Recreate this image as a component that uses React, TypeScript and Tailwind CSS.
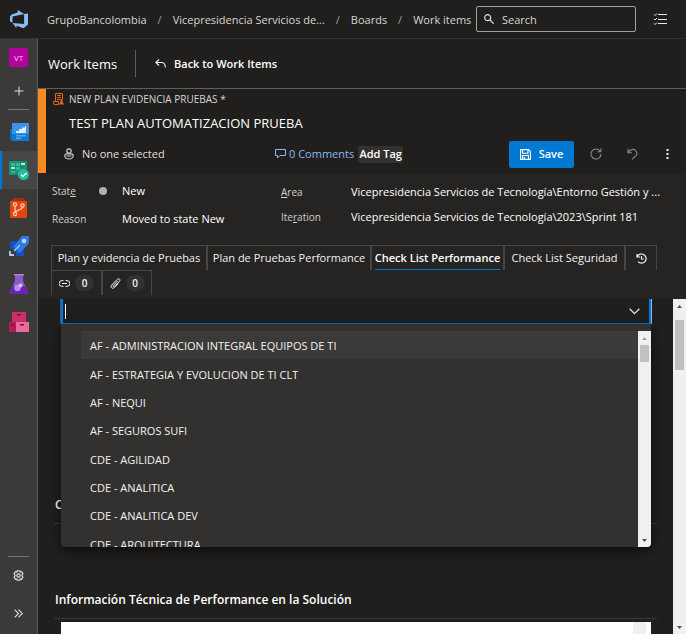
import type { ReactNode } from "react";

const BoardsIcon = () => (
  <svg width="20" height="20" viewBox="0 0 20 20" aria-hidden="true">
    <path d="M1 7h5v12H3a2 2 0 0 1-2-2z" fill="#1568b8" />
    <rect x="3" y="1" width="17" height="18" rx="1" fill="#3a95ea" />
    <path d="M3 12h17v6a1 1 0 0 1-1 1H4a1 1 0 0 1-1-1z" fill="#0f78d4" />
    <path d="M7 11V9h3V7h3V5.500h3V4h1v7z" fill="#d6ecff" />
    <path d="M7 13h10v1.500H7zM7 15.500h5V17H7z" fill="#5aa9f0" />
  </svg>
);

const WorkIcon = () => (
  <svg width="20" height="20" viewBox="0 0 20 20" aria-hidden="true">
    <rect x="0" y="1" width="18" height="14" rx="1" fill="#1b8f72" />
    <path d="M2 3h4v3H2zM7 3h4v3H7zM7 7h4v3H7zM2 11h4v2H2z" fill="#35b893" />
    <path d="M12 3h4v2h-4zM2 7h4v2H2z" fill="#a6f0d6" />
    <circle cx="14.500" cy="14.500" r="5.500" fill="#1fbf9c" />
    <path d="m12 14.500 2 2 3.500-3.500" fill="none" stroke="#fff" strokeWidth="1.400" />
  </svg>
);

const ReposIcon = () => (
  <svg width="20" height="20" viewBox="0 0 20 20" aria-hidden="true">
    <path d="M5 0h9l3 3H2z" fill="#a5300f" />
    <rect x="1" y="3" width="17" height="17" rx="1" fill="#e2450f" />
    <g fill="none" stroke="#ffc9b3" strokeWidth="1.300">
      <circle cx="6" cy="6.500" r="1.600" />
      <circle cx="13.500" cy="7.500" r="1.600" />
      <circle cx="6" cy="16" r="1.600" />
      <path d="M6 8v6.400M13.500 9.100c0 3.400-6.500 2.400-7.500 5.300" />
    </g>
  </svg>
);

const PipelinesIcon = () => (
  <svg width="20" height="20" viewBox="0 0 20 20" aria-hidden="true">
    <path d="M1 5h8l-6 8H1zM15 11v9H7v-4z" fill="#1450b8" />
    <path d="M13 0h7v7l-9 10-7-6z" fill="#2f78e8" />
    <path d="m4 10 7 7-2 1-6-6z" fill="#185bd0" />
    <circle cx="15" cy="5" r="2.300" fill="#b9d8ff" />
    <path d="m5 15 6-6" stroke="#a9ccff" strokeWidth="1.300" />
    <path d="M1 15v4h4" fill="none" stroke="#a9ccff" strokeWidth="1.800" />
  </svg>
);

const TestIcon = () => (
  <svg width="20" height="20" viewBox="0 0 20 20" aria-hidden="true">
    <path d="M6 0h8v7l5 11a1.400 1.400 0 0 1-1.300 2H2.300A1.400 1.400 0 0 1 1 18L6 7z" fill="#8c5bc9" />
    <path d="M4 12h12l3 6a1.400 1.400 0 0 1-1.300 2H2.300A1.400 1.400 0 0 1 1 18z" fill="#6a22b5" />
    <path d="M5 0h10v1.500H5z" fill="#a887d6" />
    <circle cx="8.500" cy="14" r="3.200" fill="#b98cf0" />
    <circle cx="11.500" cy="11.500" r="2" fill="#d9bfff" />
  </svg>
);

const ArtifactsIcon = () => (
  <svg width="20" height="20" viewBox="0 0 20 20" aria-hidden="true">
    <rect x="3" y="0" width="14" height="10" fill="#cc2f6c" />
    <rect x="0" y="10" width="7" height="10" fill="#b51a58" />
    <rect x="7" y="10" width="13" height="10" fill="#ea6a9c" />
    <path d="M8 2h4v1.500H8zM11 12h4v1.500h-4zM2 12h3v1.500H2z" fill="#7d1240" />
  </svg>
);

const NAV = [
  { label: "Overview", icon: <BoardsIcon />, active: false },
  { label: "Boards", icon: <WorkIcon />, active: true },
  { label: "Repos", icon: <ReposIcon />, active: false },
  { label: "Pipelines", icon: <PipelinesIcon />, active: false },
  { label: "Test Plans", icon: <TestIcon />, active: false },
  { label: "Artifacts", icon: <ArtifactsIcon />, active: false },
];

const OPTIONS = [
  "AF - ADMINISTRACION INTEGRAL EQUIPOS DE TI",
  "AF - ESTRATEGIA Y EVOLUCION DE TI CLT",
  "AF - NEQUI",
  "AF - SEGUROS SUFI",
  "CDE - AGILIDAD",
  "CDE - ANALITICA",
  "CDE - ANALITICA DEV",
  "CDE - ARQUITECTURA",
];

function TopBar() {
  return (
    <header className="flex h-[39px] shrink-0 items-center border-b border-[#323130] pl-[9px] text-[#d6d5d4]">
      <a href="#home" aria-label="Azure DevOps" className="mr-[18px]">
        <svg width="20" height="20" viewBox="0 0 20 20" aria-hidden="true">
          <path
            d="M19 4.500v11l-4.500 3.700-7-2.500v2.500l-4-5.200 11.600.9V5zM15.200 5.100 8.700 1v2.600L2.700 5.400 1 7.600v5l2.500 1.100V7.500z"
            fill="#86bdf8"
          />
        </svg>
      </a>
      <nav aria-label="Breadcrumb" className="flex items-center pt-[2px] whitespace-nowrap">
        <a href="#org">GrupoBancolombia</a>
        <span className="w-[26px] text-center text-[#a19f9d]">/</span>
        <a href="#project">Vicepresidencia Servicios de...</a>
        <span className="w-[26px] text-center text-[#a19f9d]">/</span>
        <a href="#boards">Boards</a>
        <span className="w-[26px] text-center text-[#a19f9d]">/</span>
        <a href="#items">Work items</a>
      </nav>
      <div className="ml-auto flex h-[26px] w-[160px] shrink-0 items-center rounded-xs border border-[#a19f9d] px-[7px]">
        <svg width="10" height="10" viewBox="0 0 10 10" className="shrink-0" aria-hidden="true">
          <g fill="none" stroke="#e1dfdd" strokeWidth="1.200">
            <circle cx="3.700" cy="3.700" r="3" />
            <path d="m6 6 3.700 3.700" />
          </g>
        </svg>
        <input
          type="search"
          aria-label="Search"
          placeholder="Search"
          className="ml-2 w-full min-w-0 bg-transparent pt-[2px] outline-none placeholder:text-[#d6d5d4]"
        />
      </div>
      <button type="button" aria-label="My work items" className="mr-[18px] ml-[17px]">
        <svg width="15" height="12" viewBox="0 0 15 12" aria-hidden="true">
          <path
            d="M5 1.500h9M5 6.500h9M5 10.500h9M1 1.500l1 1L4 .5M1 6l1 1 2-2M1 10.500l1 1 2-2"
            fill="none"
            stroke="#e8e6e4"
          />
        </svg>
      </button>
    </header>
  );
}

function SideBar() {
  return (
    <aside className="flex w-[38px] shrink-0 flex-col items-center border-r border-[#605e5c] bg-[#3b3a39]">
      <div className="flex h-[37px] items-center">
        <button type="button" aria-label="Project" className="size-[19px] rounded-xs bg-[#b4009e] text-[8px] text-[#f3d0ee]">
          VT
        </button>
      </div>
      <button type="button" aria-label="Add" className="flex h-[30px] items-center">
        <svg width="10" height="10" viewBox="0 0 10 10" aria-hidden="true">
          <path d="M5 .5v9M.5 5h9" stroke="#e1dfdd" fill="none" />
        </svg>
      </button>
      <hr className="my-[3px] w-[21px] border-[#797775]" />
      {NAV.map((item) => (
        <a
          key={item.label}
          href="#nav"
          aria-label={item.label}
          className={
            item.active
              ? "flex h-[38px] w-full items-center justify-center border-l-2 border-[#0078d4] bg-[#484644] pr-[2px]"
              : "flex h-[38px] w-full items-center justify-center"
          }
        >
          {item.icon}
        </a>
      ))}
      <hr className="mt-auto w-[21px] border-[#797775]" />
      <button type="button" aria-label="Project settings" className="flex h-[36px] items-center">
        <svg width="11" height="11" viewBox="0 0 12 12" aria-hidden="true">
          <g fill="none" stroke="#e1dfdd" strokeWidth="1.300">
            <path d="M4.600.8h2.800l.4 1.500 1.600-.4 1.400 2.300L9.700 6l1.100 1.800-1.400 2.300-1.600-.4-.4 1.500H4.600l-.4-1.500-1.600.4-1.400-2.300L2.300 6 1.200 4.200l1.400-2.300 1.600.4z" />
            <circle cx="6" cy="6" r="1.800" />
          </g>
        </svg>
      </button>
      <button type="button" aria-label="Expand" className="flex h-[41px] items-center">
        <svg width="9" height="9" viewBox="0 0 9 9" aria-hidden="true">
          <path d="m.7.7 3.800 3.800L.7 8.300M4.500.7l3.800 3.800-3.800 3.800" fill="none" stroke="#e1dfdd" strokeWidth="1.100" />
        </svg>
      </button>
    </aside>
  );
}

function WorkItemHeader() {
  return (
    <section className="flex h-[84px] shrink-0 flex-col border-l-8 border-[#f78b1f] pl-[7px]">
      <div className="flex h-[19px] items-center text-[10px] text-[#d6d5d4]">
        <svg width="11" height="12" viewBox="0 0 11 12" className="mr-[5px]" aria-hidden="true">
          <path d="M2.500 8.500v-8h7v6M.5 8.500h5v3H1.500a1 1 0 0 1-1-1zM4 2.500h4M4 4.500h4M4 6.500h3" fill="none" stroke="#e8641c" />
          <path d="M7.500 6h2v2.500l1.500 3H6l1.500-3z" fill="#e8641c" />
        </svg>
        NEW PLAN EVIDENCIA PRUEBAS *
      </div>
      <input
        aria-label="Title"
        defaultValue="TEST PLAN AUTOMATIZACION PRUEBA"
        className="ml-4 h-[29px] bg-transparent text-[13px] text-white outline-none"
      />
      <div className="flex h-[34px] items-center text-[#e1dfdd]">
        <button type="button" className="ml-[11px] flex w-[211px] items-center whitespace-nowrap">
          <svg width="10" height="12" viewBox="0 0 10 12" className="mr-[8px]" aria-hidden="true">
            <g fill="none" stroke="#d2d0ce" strokeWidth="1.200">
              <circle cx="5" cy="3" r="2.200" />
              <path d="M2.800 5.800h4.400a2 2 0 0 1 2 2 4.200 3.200 0 0 1-8.400 0 2 2 0 0 1 2-2zM2.500 8h5" />
            </g>
          </svg>
          No one selected
        </button>
        <a href="#comments" className="flex items-center whitespace-nowrap text-[#8ab9f0]">
          <svg width="11" height="10" viewBox="0 0 11 10" className="mr-[3px]" aria-hidden="true">
            <path d="M.5.500h10v6H5L2.500 9V6.500h-2z" fill="none" stroke="#8ab9f0" />
          </svg>
          0 Comments
        </a>
        <button type="button" className="ml-[4px] flex h-[17px] w-[45px] shrink-0 items-center justify-center rounded-xs bg-[#323130] font-semibold whitespace-nowrap text-white">
          Add Tag
        </button>
        <button
          type="button"
          className="ml-auto flex h-[27px] w-[65px] shrink-0 items-center justify-center gap-[8px] rounded-xs bg-[#0078d4] font-semibold text-white"
        >
          <svg width="11" height="11" viewBox="0 0 11 11" aria-hidden="true">
            <path d="M.6.600h8l1.800 1.800v8H.6zM2.600.600v3.600h5.400V.600M2.600 10.400V6.500h5.800v3.900M4.500 8v2.400" fill="none" stroke="#fff" strokeWidth="1.100" />
          </svg>
          Save
        </button>
        <button type="button" aria-label="Refresh" className="ml-4">
          <svg width="12" height="12" viewBox="0 0 12 12" aria-hidden="true">
            <path d="M10.300 3.500A5 5 0 1 0 11 6M10.800.500v3.200H7.600" fill="none" stroke="#8a8886" strokeWidth="1.100" />
          </svg>
        </button>
        <button type="button" aria-label="Undo" className="ml-[25px]">
          <svg width="11" height="12" viewBox="0 0 11 12" aria-hidden="true">
            <path d="M1 .8v4h4M1.200 4.600C3 1.500 6.500.500 8.500 2.300c2 1.700 1.800 4 .2 5.600L5 11.400" fill="none" stroke="#8a8886" strokeWidth="1.100" />
          </svg>
        </button>
        <button type="button" aria-label="More actions" className="mr-[17px] ml-[28px]">
          <svg width="3" height="10" viewBox="0 0 3 10" aria-hidden="true">
            <path d="M.5 0h2v2h-2zM.5 4h2v2h-2zM.5 8h2v2h-2z" fill="#f3f2f1" />
          </svg>
        </button>
      </div>
    </section>
  );
}

function Field({ id, label, value }: { id: string; label: ReactNode; value: string }) {
  return (
    <div className="flex h-[28px] items-center">
      <label htmlFor={id} className="w-[70px] shrink-0 text-[10px] text-[#d2d0ce]">
        {label}
      </label>
      <input id={id} defaultValue={value} className="min-w-0 flex-1 bg-transparent text-white outline-none" />
    </div>
  );
}

function Fields() {
  return (
    <div className="flex h-[72px] shrink-0 pl-[14px]">
      <div className="w-[229px] shrink-0 pt-[4px]">
        <div className="flex h-[28px] items-center">
          <label htmlFor="state" className="w-[47px] shrink-0 text-[10px] text-[#d2d0ce]">
            Stat<u>e</u>
          </label>
          <span className="mr-[15px] size-[8px] shrink-0 rounded-full bg-[#b2b0ae]" />
          <input id="state" defaultValue="New" className="min-w-0 flex-1 bg-transparent text-white outline-none" />
        </div>
        <Field id="reason" label="Reason" value="Moved to state New" />
      </div>
      <div className="min-w-0 flex-1 pt-[5px] pr-[20px]">
        <Field
          id="area"
          label={<><u>A</u>rea</>}
          value={"Vicepresidencia Servicios de Tecnología\\Entorno Gestión y ..."}
        />
        <div className="-mt-[3px]">
          <Field
            id="iteration"
            label={<>Ite<u>r</u>ation</>}
            value={"Vicepresidencia Servicios de Tecnología\\2023\\Sprint 181"}
          />
        </div>
      </div>
    </div>
  );
}

function Tabs() {
  const base = "flex h-[25px] shrink-0 items-center justify-center border-x border-t border-[#484644] whitespace-nowrap";
  return (
    <div role="tablist" className="ml-[13px] flex h-[54px] shrink-0 flex-wrap content-start text-[#f3f2f1]">
      <button type="button" role="tab" className={`${base} w-[156px]`}>Plan y evidencia de Pruebas</button>
      <button type="button" role="tab" className={`${base} w-[164px]`}>Plan de Pruebas Performance</button>
      <button type="button" role="tab" aria-selected="true" className={`${base} w-[133px]`}>
        <span className="h-full border-b border-[#0078d4] pt-[4px] font-semibold text-white">Check List Performance</span>
      </button>
      <button type="button" role="tab" className={`${base} w-[121px]`}>Check List Seguridad</button>
      <button type="button" role="tab" aria-label="History" className={`${base} w-[32px]`}>
        <svg width="11" height="11" viewBox="0 0 11 11" aria-hidden="true">
          <path d="M1 1v3h3M1.300 3.700A4.600 4.600 0 1 1 2 8.600M5.500 3v3h2.300" fill="none" stroke="#f3f2f1" strokeWidth="1.200" />
        </svg>
      </button>
      <div className="flex w-full">
        <button type="button" role="tab" aria-label="Links" className={`${base} w-[51px] gap-[5px]`}>
          <svg width="11" height="7" viewBox="0 0 11 7" aria-hidden="true">
            <path d="M4.500.600h-1.500a2.900 2.900 0 0 0 0 5.800h1.500M6.500.600H8a2.900 2.900 0 0 1 0 5.800H6.500M3 3.500h5" fill="none" stroke="#f3f2f1" />
          </svg>
          <span className="h-[16px] w-[19px] rounded-full bg-[#323130] text-[10px] leading-4 font-semibold">0</span>
        </button>
        <button type="button" role="tab" aria-label="Attachments" className={`${base} w-[50px] gap-[5px]`}>
          <svg width="11" height="11" viewBox="0 0 11 11" aria-hidden="true">
            <path d="M7.800 2.800 3.300 7.500c-.7.700.4 1.700 1.100 1L9.300 3.500C11 1.700 8.900-.300 7.200 1.400L1.700 7c-1.900 2 .6 4.500 2.500 2.600l4-4" fill="none" stroke="#f3f2f1" />
          </svg>
          <span className="h-[16px] w-[19px] rounded-full bg-[#323130] text-[10px] leading-4 font-semibold">0</span>
        </button>
      </div>
    </div>
  );
}

function Arrow({ up, color }: { up?: boolean; color: string }) {
  return (
    <svg width="13" height="14" viewBox="0 0 13 14" className="shrink-0" aria-hidden="true">
      <path d={up ? "M4 9h5L6.500 6z" : "M4 6h5L6.500 9z"} fill={color} />
    </svg>
  );
}

function Combo() {
  return (
    <div className="relative z-10 ml-[7px] mr-[6px] h-[25px]">
      <div className="flex h-full items-center border-x-2 border-b border-[#0078d4] pr-[9px] shadow-[1px_0_0_#8ab9f0,-1px_0_0_#2b5a8c]">
        <span className="ml-[2px] h-[15px] w-px bg-white" />
        <input
          role="combobox"
          aria-label="Equipo"
          aria-expanded="true"
          aria-controls="teams"
          className="h-full min-w-0 flex-1 bg-transparent outline-none"
        />
        <svg width="11" height="7" viewBox="0 0 11 7" aria-hidden="true">
          <path d="m.7.800 4.800 4.800L10.300.800" fill="none" stroke="#e1dfdd" strokeWidth="1.300" />
        </svg>
      </div>
      <div className="absolute inset-x-0 top-full flex h-[223px] overflow-hidden rounded-b-sm bg-[#323130] pt-[7px] shadow-[0_4px_12px_rgba(0,0,0,0.6)]">
        <ul id="teams" role="listbox" className="flex h-[227px] min-w-0 flex-1 flex-col pl-[20px] text-[#f3f2f1]">
          {OPTIONS.map((name, i) => (
            <li
              key={name}
              role="option"
              aria-selected={i === 0}
              className={i === 0 ? "flex flex-1 items-center bg-[#3b3a39] pt-[2px] pl-[9px]" : "flex flex-1 items-center pt-[2px] pl-[9px]"}
            >
              {name}
            </li>
          ))}
        </ul>
        <div className="flex w-[13px] shrink-0 flex-col items-center bg-[#f0f0f0]">
          <Arrow up color="#a3a3a3" />
          <div className="h-[17px] w-[9px] shrink-0 bg-[#c1c1c1]" />
          <div className="flex-1" />
          <Arrow color="#505050" />
        </div>
      </div>
    </div>
  );
}

function SectionTitle({ children }: { children: ReactNode }) {
  return (
    <h2 className="flex h-[38px] items-center border-b border-[#3b3a39] pl-px text-[12px] font-semibold text-white">{children}</h2>
  );
}

export default function App() {
  return (
    <div className="flex h-screen flex-col overflow-hidden bg-[#201f1e] font-['Open_Sans','Noto_Sans',sans-serif] text-[11px] leading-4">
      <TopBar />
      <div className="flex min-h-0 flex-1">
        <SideBar />
        <main className="flex min-w-0 flex-1 flex-col">
          <div className="flex h-[50px] shrink-0 items-center border-b border-[#605e5c] pl-[10px] text-white">
            <h1 className="w-[87px] text-[13px] whitespace-nowrap">Work Items</h1>
            <a href="#back" className="flex h-[27px] items-center border-l border-[#605e5c] pl-[19px] font-semibold">
              <svg width="11" height="9" viewBox="0 0 11 9" className="mr-[8px]" aria-hidden="true">
                <path d="M4 .500.900 3.500 4 6.500M1 3.500h5.500c2.500 0 3.800 1.800 3.800 5" fill="none" stroke="#f3f2f1" strokeWidth="1.100" />
              </svg>
              Back to Work Items
            </a>
          </div>
          <WorkItemHeader />
          <div className="shrink-0 bg-[#252423]">
            <Fields />
            <Tabs />
          </div>
          <div className="flex min-h-0 flex-1">
            <div className="min-w-0 flex-1 overflow-hidden pr-[16px] pl-4">
              <Combo />
              <div className="pt-[162px]">
                <SectionTitle>C</SectionTitle>
              </div>
              <div className="pt-[57px]">
                <SectionTitle>Información Técnica de Performance en la Solución</SectionTitle>
              </div>
              <div className="mt-[3px] mr-[6px] ml-[7px] flex h-[80px] bg-white pr-[5px]">
                <textarea aria-label="Información Técnica" className="min-w-0 flex-1 resize-none outline-none" />
                <div className="w-[13px] bg-[#f0f0f0]" />
              </div>
            </div>
            <div className="flex w-[13px] shrink-0 flex-col items-center bg-[#f0f0f0]">
              <Arrow up color="#505050" />
              <div className="mt-[7px] h-[50px] w-[9px] shrink-0 bg-[#c1c1c1]" />
              <div className="flex-1" />
              <Arrow color="#505050" />
            </div>
          </div>
        </main>
      </div>
    </div>
  );
}
